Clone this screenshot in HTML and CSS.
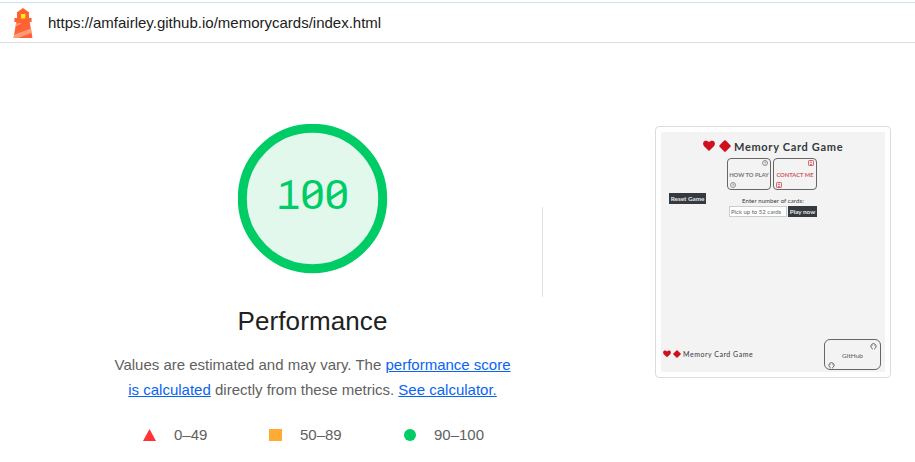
FILE: index.html
```html
<!DOCTYPE html>
<html lang="en">
<head>
<meta charset="utf-8">
<title>Performance report</title>
<link rel="stylesheet" href="styles.css">
</head>
<body>
<svg class="defs" width="0" height="0" aria-hidden="true">
  <symbol id="heart" viewBox="0 0 12 12"><path d="M6 11 1.1 6.2C-.4 4.5-.1 2 1.5 1.1 3 .3 4.8.7 6 2.2 7.2.7 9 .3 10.5 1.1c1.6.9 1.9 3.4.4 5.1z" fill="#d0101f"/></symbol>
  <symbol id="diamond" viewBox="0 0 12 12"><path d="M5.2.6q.8-.8 1.6 0l4.6 4.6q.8.8 0 1.6l-4.6 4.6q-.8.8-1.6 0L.6 6.8q-.8-.8 0-1.6z" fill="#d0101f"/></symbol>
  <symbol id="help" viewBox="0 0 6 6"><circle cx="3" cy="3" r="2.5" fill="none" stroke="#666" stroke-width=".7"/><path d="M2.1 2.3q.9-1 1.7 0 .2.6-.8 1.1v.8" fill="none" stroke="#777" stroke-width=".6"/></symbol>
  <symbol id="person" viewBox="0 0 6 6"><rect x=".5" y=".5" width="5" height="5" rx=".7" fill="none" stroke="#cf4150" stroke-width=".8"/><circle cx="3" cy="2.3" r=".8" fill="#cf4150"/><path d="M1.5 4.7q1.5-2 3 0z" fill="#cf4150"/></symbol>
  <symbol id="octo" viewBox="0 0 7 7"><path d="M2.4 6.3V5.6A2.6 2.6 0 1 1 4.6 5.6v.7" fill="none" stroke="#5e6367" stroke-width="1"/><path d="M1.8 1.4 3 1.9 1.8 3zM5.2 1.4 4 1.9 5.2 3z" fill="#5e6367"/></symbol>
</svg>
<header class="topbar">
  <svg class="lighthouse" width="20" height="31" viewBox="0 0 20 31">
    <path d="M10 0 16 4.3V10h2.6v4H16.7L19.5 30H.5L3.3 14H1.4v-4H4V4.3z" fill="#ff6334"/>
    <rect x="8" y="6" width="4.3" height="4.5" fill="#ffeb13"/>
    <path d="M3.3 15.2H9L2.5 18.6zM1.4 26.5 18 20.4l.7 4.3L5 30H.7z" fill="#ff9a7b"/>
  </svg>
  <span class="url">https://amfairley.github.io/memorycards/index.html</span>
</header>
<main class="report">
  <section class="score">
    <svg class="gauge" width="150" height="150" viewBox="0 0 150 150">
      <circle cx="74.5" cy="74.5" r="70.2" fill="#e3f8ed" stroke="#00cc66" stroke-width="9"/>
      <g class="gauge-text"><text x="39.5" y="85">1</text><text x="62" y="85" textLength="25" lengthAdjust="spacingAndGlyphs">0</text><text x="86.3" y="85" textLength="25" lengthAdjust="spacingAndGlyphs">0</text></g>
      <path d="M41.5 83.4H60.5M67.3 75 81.3 66M91.6 75 105.6 66" fill="none" stroke="#00cc66" stroke-width="3.2"/>
    </svg>
    <h1>Performance</h1>
    <p class="summary">Values are estimated and may vary. The <a>performance score</a><br><a>is calculated</a> directly from these metrics. <a>See calculator.</a></p>
    <div class="legend">
      <svg width="13" height="12"><path d="M6.5 0 13 12H0z" fill="#ff3333"/></svg><span class="poor">0–49</span>
      <svg width="13" height="12"><path d="M0 0h13v12H0z" fill="#ffaa33"/></svg><span class="mid">50–89</span>
      <svg width="12" height="12"><circle cx="6" cy="6" r="6" fill="#00cc66"/></svg><span class="good">90–100</span>
    </div>
  </section>
  <div class="divider"></div>
  <aside class="preview">
    <div class="page">
      <div class="brand"><svg width="12" height="12"><use href="#heart"/></svg><svg width="12" height="12"><use href="#diamond"/></svg><span>Memory Card Game</span></div>
      <div class="cards">
        <div class="card"><svg width="6" height="6"><use href="#help"/></svg><span>HOW TO PLAY</span><svg width="6" height="6"><use href="#help"/></svg></div>
        <div class="card contact"><svg width="6" height="6"><use href="#person"/></svg><span>CONTACT ME</span><svg width="6" height="6"><use href="#person"/></svg></div>
      </div>
      <div class="controls">
        <div class="btn reset">Reset Game</div>
        <div class="entry"><div class="label">Enter number of cards:</div>
          <div class="row"><div class="field">Pick up to 52 cards</div><div class="btn play">Play now</div></div>
        </div>
      </div>
      <div class="footer">
        <div class="brand small"><svg width="8" height="8"><use href="#heart"/></svg><svg width="8" height="8"><use href="#diamond"/></svg><span>Memory Card Game</span></div>
        <div class="card github"><svg width="7" height="7"><use href="#octo"/></svg><span>GitHub</span><svg width="7" height="7"><use href="#octo"/></svg></div>
      </div>
    </div>
  </aside>
</main>
</body>
</html>
```
FILE: styles.css
```css
* { box-sizing: border-box; }
body { margin: 0; padding-top: 2px; height: 462px; overflow: hidden; background: #fff; font-family: "Liberation Sans", Arial, sans-serif; color: #212121; }
svg { display: block; flex: none; }
.defs { position: absolute; }
.topbar { height: 41px; border-top: 1px solid #cfdffc; border-bottom: 1px solid #dedede; display: flex; align-items: center; padding: 0 0 0 13px; }
.lighthouse { margin-top: 1px; }
.url { margin-left: 15px; font-size: 15px; line-height: 18px; white-space: nowrap; }
.report { display: flex; align-items: flex-start; padding-left: 83px; }
.score { width: 459px; padding-top: 81px; display: flex; flex-direction: column; align-items: center; }
.gauge-text { font: 40px Roboto, sans-serif; fill: #00cc66; }
h1 { margin: 32px 0 0; font-size: 26px; line-height: 30px; font-weight: 400; letter-spacing: 0.1px; white-space: nowrap; }
.summary { margin: 16px 0 0; font-size: 15px; line-height: 25px; text-align: center; color: #616161; white-space: nowrap; }
.summary a { color: #0963f5; text-decoration: underline; }
.legend { display: flex; align-items: center; align-self: flex-start; margin: 24px 0 0 60px; font-size: 15px; line-height: 18px; color: #616161; }
.legend span { margin-left: 18px; white-space: nowrap; }
.legend .poor { width: 95px; }
.legend .mid { width: 104px; }
.divider { width: 1px; height: 90px; margin-top: 164px; background: #e0e0e0; }
.preview { width: 236px; height: 252px; margin: 83px 0 0 112px; padding: 5px; border: 1px solid #dcdcdc; border-radius: 4px; }
.page { height: 240px; background: #f3f3f3; padding-top: 7px; font-family: Lato, sans-serif; color: #343a40; display: flex; flex-direction: column; }
.brand { display: flex; align-items: center; gap: 4px; margin-left: 42px; height: 14px; font-size: 11px; font-weight: 700; letter-spacing: 0.68px; white-space: nowrap; }
.brand span { margin-left: -1px; }
.cards { display: flex; gap: 2px; margin: 5px 0 0 66px; }
.card { width: 44px; height: 32px; border: 1px solid #666; border-radius: 4px; display: flex; flex-direction: column; justify-content: space-between; align-items: flex-start; padding: 1px 2px; font-size: 6.5px; line-height: 12px; color: #55595c; }
.card span { align-self: center; white-space: nowrap; }
.card svg:first-child { align-self: flex-end; }
.cards .card { font-weight: 700; font-size: 5.8px; color: #73777a; }
.cards .card span { padding-top: 1px; line-height: 11px; margin: 0 -2px; }
.cards .contact { color: #d35661; }
.controls { display: flex; margin: 3px 0 0 8px; }
.btn { background: #343a40; color: #e8e8e8; font-size: 6.3px; line-height: 11px; text-align: center; font-weight: 700; white-space: nowrap; }
.reset { width: 37px; height: 11px; }
.entry { margin-left: 23px; padding-top: 3px; }
.label { margin-left: 13px; font-size: 6px; line-height: 10px; letter-spacing: 0.1px; white-space: nowrap; }
.row { display: flex; gap: 1px; }
.field { width: 58px; height: 11px; border: 1px solid #ccc; background: #fff; font: 6px/9px Lato, sans-serif; color: #5c656d; white-space: nowrap; padding-left: 1px; }
.play { width: 29px; height: 11px; }
.footer { margin-top: auto; display: flex; justify-content: space-between; align-items: center; padding: 0 4px 2px 2px; }
.small { gap: 2px; margin: -2px 0 0; font-size: 7px; font-weight: 400; letter-spacing: 0.52px; }
.small span { margin-left: 0; }
.github { width: 57px; height: 31px; border-radius: 6px; padding: 3px; }
```
